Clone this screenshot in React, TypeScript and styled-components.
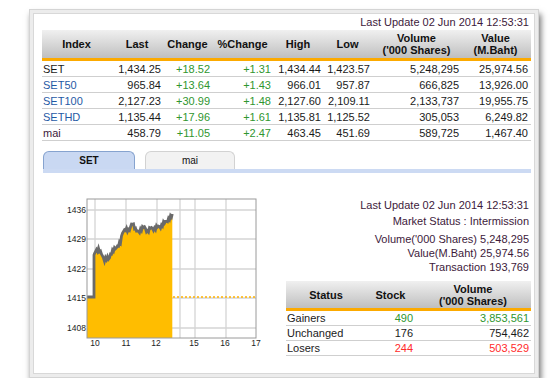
import React from "react";
import styled, { createGlobalStyle } from "styled-components";

const GlobalStyle = createGlobalStyle`
  html, body { margin: 0; padding: 0; background: #fff; }
  body {
    font-family: "Liberation Sans", Arial, sans-serif;
    font-size: 11px;
    color: #222;
  }
`;

const Frame = styled.div`
  margin: 9px 0 0 29px;
  width: 510px;
  height: 369px;
  box-sizing: border-box;
  background: #ececec;
  border: 1px solid #d4d4d4;
  padding: 3px;
  box-shadow: 2px 5px 6px rgba(0, 0, 0, 0.55);
`;

const Panel = styled.div`
  height: 100%;
  box-sizing: border-box;
  background: #fff;
  border: 1px solid #d8d8d8;
  padding: 0 3px 0 8px;
  display: flex;
  flex-direction: column;
`;

const UpdateLine = styled.div`
  height: 16px;
  line-height: 16px;
  text-align: right;
  padding-right: 2px;
  color: #3d1a3b;
`;

const Grid = styled.div<{ $cols: string }>`
  display: grid;
  grid-template-columns: ${(p) => p.$cols};
`;

const HeadRow = styled(Grid)<{ $h: number }>`
  height: ${(p) => p.$h}px;
  background: linear-gradient(#f0f0f0, #bfbfbf);
  border-bottom: 3px solid #fcaa00;
`;

const HeadCell = styled.div`
  display: flex;
  align-items: center;
  justify-content: center;
  text-align: center;
  font-weight: bold;
  line-height: 12px;
  color: #111;
`;

const BodyRow = styled(Grid)<{ $h: number }>`
  height: ${(p) => p.$h}px;
  box-sizing: border-box;
  border-bottom: 1px solid #cfcfcf;
  align-items: center;
`;

type Tone = "plain" | "up" | "down" | "link" | "mai";
const toneColor: Record<Tone, string> = {
  plain: "#1a1a1a",
  up: "#2f962f",
  down: "#ff2b2b",
  link: "#1f5aa5",
  mai: "#3d1a3b",
};

const Cell = styled.div<{ $tone?: Tone; $left?: boolean }>`
  text-align: ${(p) => (p.$left ? "left" : "right")};
  padding: ${(p) => (p.$left ? "0 0 0 1px" : "0 2px 0 0")};
  color: ${(p) => toneColor[p.$tone || "plain"]};
  white-space: nowrap;
`;

const TabRow = styled.div`
  display: flex;
  gap: 10px;
  margin-top: 10px;
  padding-left: 1px;
  height: 18px;
`;

const Tab = styled.div<{ $active?: boolean; $w: number }>`
  width: ${(p) => p.$w}px;
  box-sizing: border-box;
  border: 1px solid ${(p) => (p.$active ? "#86a3cf" : "#d2d2d2")};
  border-bottom: none;
  border-radius: 6px 6px 0 0;
  background: ${(p) => (p.$active ? "#c9d8f2" : "#f2f2f2")};
  display: flex;
  align-items: center;
  justify-content: center;
  font-size: 10px;
  font-weight: ${(p) => (p.$active ? "bold" : "normal")};
  color: #111;
`;

const TabBar = styled.div`
  height: 4px;
  margin-left: 1px;
  background: #ccdaf3;
`;

const Bottom = styled.div`
  display: flex;
`;

const ChartBox = styled.div`
  margin: 17px 0 0 2px;
  width: 232px;
  height: 165px;
`;

const Info = styled.div`
  flex: 1;
  display: flex;
  flex-direction: column;
  align-items: flex-end;
  padding-top: 24px;
`;

const InfoLines = styled.div<{ $lh: number; $mt?: number }>`
  text-align: right;
  line-height: ${(p) => p.$lh}px;
  margin-top: ${(p) => p.$mt || 0}px;
  padding-right: 2px;
  color: #3d1a3b;
`;

const StatusTable = styled.div`
  margin-top: 7px;
  width: 245px;
`;

const mainCols = "69px 52px 49px 61px 50px 49px 89px 69px";
const statusCols = "80px 49px 116px";

const rows: { name: string; tone: Tone; vals: string[] }[] = [
  { name: "SET", tone: "plain", vals: ["1,434.25", "+18.52", "+1.31", "1,434.44", "1,423.57", "5,248,295", "25,974.56"] },
  { name: "SET50", tone: "link", vals: ["965.84", "+13.64", "+1.43", "966.01", "957.87", "666,825", "13,926.00"] },
  { name: "SET100", tone: "link", vals: ["2,127.23", "+30.99", "+1.48", "2,127.60", "2,109.11", "2,133,737", "19,955.75"] },
  { name: "SETHD", tone: "link", vals: ["1,135.44", "+17.96", "+1.61", "1,135.81", "1,125.52", "305,053", "6,249.82"] },
  { name: "mai", tone: "mai", vals: ["458.79", "+11.05", "+2.47", "463.45", "451.69", "589,725", "1,467.40"] },
];

const statusRows: { name: string; tone: Tone; stock: string; vol: string }[] = [
  { name: "Gainers", tone: "up", stock: "490", vol: "3,853,561" },
  { name: "Unchanged", tone: "plain", stock: "176", vol: "754,462" },
  { name: "Losers", tone: "down", stock: "244", vol: "503,529" },
];

const keyPts: [number, number][] = [
  [95, 255], [96.7, 251.7], [100, 250], [103.3, 255], [105, 260], [108.3, 256.7],
  [110, 258.3], [111.7, 253.3], [115, 248.3], [118.3, 246.7], [121.7, 241.7],
  [123.3, 233.3], [126.7, 230], [130, 231.7], [133.3, 223.3], [136.7, 230],
  [140, 231.7], [145, 225], [148.3, 231.7], [151.7, 226.7], [155, 230],
  [158.3, 226.7], [161.7, 228.3], [165, 223.3], [168.3, 221.7], [171.7, 216.7], [173.3, 215],
];

function interp(x: number): number {
  for (let i = 0; i < keyPts.length - 1; i++) {
    const [x0, y0] = keyPts[i];
    const [x1, y1] = keyPts[i + 1];
    if (x >= x0 && x <= x1) return y0 + ((y1 - y0) * (x - x0)) / (x1 - x0);
  }
  return keyPts[keyPts.length - 1][1];
}

function buildLine(): string {
  const pts: string[] = ["88,297", "95,297", "95,255"];
  for (let x = 95.5; x <= 173.3; x += 1) {
    const n = 1.5 * Math.sin(x * 2.7) + 0.9 * Math.sin(x * 6.1);
    pts.push(`${x.toFixed(1)},${(interp(x) + n).toFixed(1)}`);
  }
  pts.push("173.3,214");
  return pts.join(" ");
}

const linePts = buildLine();
const fillPts = `${linePts} 173.3,338 88,338`;

const yLabels: [string, number][] = [["1436", 210], ["1429", 239], ["1422", 269], ["1415", 298], ["1408", 328]];
const xLines = [96, 127, 158, 181, 196, 227];
const xLabels: [string, number][] = [["10", 96], ["11", 127], ["12", 157], ["15", 195], ["16", 226], ["17", 257]];

const Chart = () => (
  <svg width="232" height="165" viewBox="45 190 232 165">
    <rect x="88" y="199" width="169" height="139" fill="#fff" />
    {yLabels.map(([, y]) => (
      <line key={y} x1="88" x2="257" y1={y} y2={y} stroke="#d4d4d4" strokeWidth="1.3" />
    ))}
    {xLines.map((x) => (
      <line key={x} x1={x} x2={x} y1="199" y2="338" stroke="#d4d4d4" strokeWidth="1.3" />
    ))}
    <polygon points={fillPts} fill="#ffbd00" />
    <polyline points={linePts} fill="none" stroke="#6a6a6a" strokeWidth="2.8" strokeLinejoin="miter" />
    <line x1="174" x2="257" y1="297" y2="297" stroke="#ffb300" strokeWidth="1.4" strokeDasharray="2 2" />
    <rect x="88" y="199" width="169" height="139" fill="none" stroke="#9a9a9a" strokeWidth="1" />
    {yLabels.map(([t, y]) => (
      <text key={t} x="87" y={y + 3} textAnchor="end" fontSize="8.5" fill="#222" fontFamily="Liberation Sans, Arial, sans-serif">
        {t}
      </text>
    ))}
    {xLabels.map(([t, x]) => (
      <text key={t} x={x} y="346" textAnchor="middle" fontSize="8.5" fill="#222" fontFamily="Liberation Sans, Arial, sans-serif">
        {t}
      </text>
    ))}
  </svg>
);

export default function App() {
  return (
    <>
      <GlobalStyle />
      <Frame>
        <Panel>
          <UpdateLine>Last Update 02 Jun 2014 12:53:31</UpdateLine>
          <HeadRow $cols={mainCols} $h={28}>
            <HeadCell>Index</HeadCell>
            <HeadCell>Last</HeadCell>
            <HeadCell>Change</HeadCell>
            <HeadCell>%Change</HeadCell>
            <HeadCell>High</HeadCell>
            <HeadCell>Low</HeadCell>
            <HeadCell>
              Volume
              <br />
              ('000 Shares)
            </HeadCell>
            <HeadCell>
              Value
              <br />
              (M.Baht)
            </HeadCell>
          </HeadRow>
          {rows.map((r) => (
            <BodyRow key={r.name} $cols={mainCols} $h={16}>
              <Cell $left $tone={r.tone}>{r.name}</Cell>
              <Cell>{r.vals[0]}</Cell>
              <Cell $tone="up">{r.vals[1]}</Cell>
              <Cell $tone="up">{r.vals[2]}</Cell>
              <Cell>{r.vals[3]}</Cell>
              <Cell>{r.vals[4]}</Cell>
              <Cell>{r.vals[5]}</Cell>
              <Cell>{r.vals[6]}</Cell>
            </BodyRow>
          ))}
          <TabRow>
            <Tab $active $w={92}>SET</Tab>
            <Tab $w={90}>mai</Tab>
          </TabRow>
          <TabBar />
          <Bottom>
            <ChartBox>
              <Chart />
            </ChartBox>
            <Info>
              <InfoLines $lh={16}>
                Last Update 02 Jun 2014 12:53:31
                <br />
                Market Status : Intermission
              </InfoLines>
              <InfoLines $lh={14} $mt={3}>
                Volume('000 Shares) 5,248,295
                <br />
                Value(M.Baht) 25,974.56
                <br />
                Transaction 193,769
              </InfoLines>
              <StatusTable>
                <HeadRow $cols={statusCols} $h={27}>
                  <HeadCell>Status</HeadCell>
                  <HeadCell>Stock</HeadCell>
                  <HeadCell>
                    Volume
                    <br />
                    ('000 Shares)
                  </HeadCell>
                </HeadRow>
                {statusRows.map((s) => (
                  <BodyRow key={s.name} $cols={statusCols} $h={15}>
                    <Cell $left>{s.name}</Cell>
                    <Cell $tone={s.tone}>{s.stock}</Cell>
                    <Cell $tone={s.tone}>{s.vol}</Cell>
                  </BodyRow>
                ))}
              </StatusTable>
            </Info>
          </Bottom>
        </Panel>
      </Frame>
    </>
  );
}
